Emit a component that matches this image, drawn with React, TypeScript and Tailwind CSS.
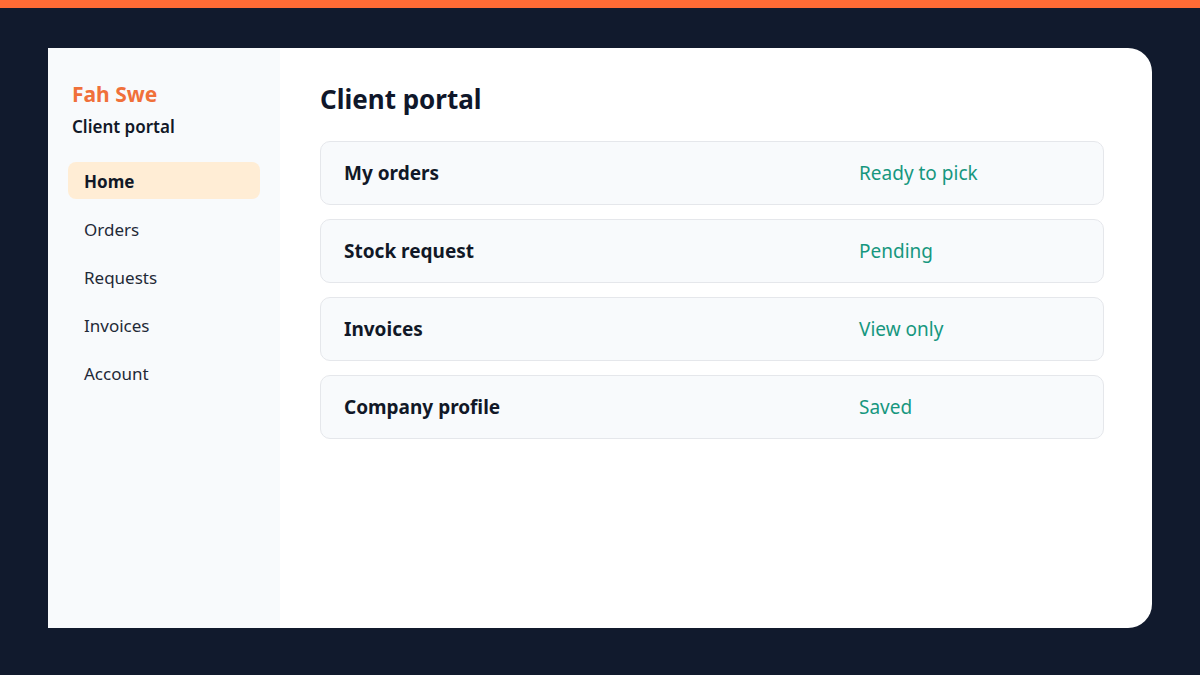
const nav = ["Home", "Orders", "Requests", "Invoices", "Account"];

const rows = [
  { label: "My orders", status: "Ready to pick" },
  { label: "Stock request", status: "Pending" },
  { label: "Invoices", status: "View only" },
  { label: "Company profile", status: "Saved" },
];

export default function App() {
  return (
    <div
      className="flex h-[675px] w-[1200px] flex-col bg-[#111a2d]"
      style={{ fontFamily: '"Noto Sans", "Open Sans", sans-serif' }}
    >
      <div className="h-2 shrink-0 bg-[#ff6b35]" />
      <div className="flex flex-1 px-12 pt-10 pb-[47px]">
        <div className="flex flex-1 overflow-hidden rounded-r-[24px] bg-white">
          <aside className="flex w-[232px] shrink-0 flex-col bg-[#f8fafc] px-5 pt-[30px]">
            <div className="px-1">
              <div className="text-[21px] font-bold leading-8 text-[#f0703a]">Fah Swe</div>
              <div className="mt-[5px] text-[17px] font-semibold leading-6 text-[#111827]">
                Client portal
              </div>
            </div>
            <nav className="mt-[23px] flex flex-col gap-[11px]">
              {nav.map((item, i) => (
                <div
                  key={item}
                  className={
                    i === 0
                      ? "flex h-[37px] items-center rounded-lg bg-[#ffedd5] px-4 pt-[3px] text-[17px] font-bold text-[#111827]"
                      : "flex h-[37px] items-center rounded-lg px-4 pt-[3px] text-[17px] text-[#1f2937]"
                  }
                >
                  {item}
                </div>
              ))}
            </nav>
          </aside>
          <main className="flex-1 pt-[31px] pr-12 pl-10">
            <h1 className="text-[26px] font-bold leading-10 text-[#0f172a]">Client portal</h1>
            <div className="mt-[22px] flex flex-col gap-[14px]">
              {rows.map((r) => (
                <div
                  key={r.label}
                  className="grid h-[64px] grid-cols-[1fr_220px] items-center rounded-[10px] border border-[#e5e7eb] bg-[#f8fafc] pr-6 pl-[23px]"
                >
                  <span className="text-[19px] font-bold text-[#111827]">{r.label}</span>
                  <span className="text-[19px] text-[#16977f]">{r.status}</span>
                </div>
              ))}
            </div>
          </main>
        </div>
      </div>
    </div>
  );
}
